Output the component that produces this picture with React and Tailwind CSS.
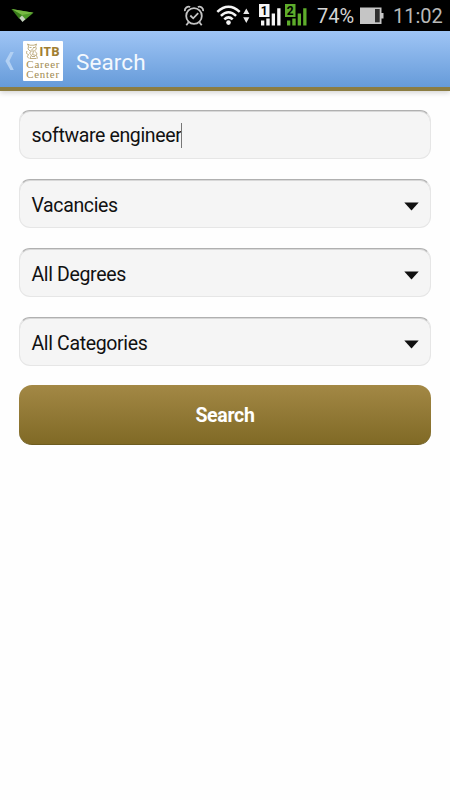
import React from "react";

function Plane() {
  return (
    <svg className="ml-[11px] h-[31px] w-[24px]" viewBox="11 0 24 31">
      <path d="M11.5 9L33.5 12.7L25.5 19.5Z" fill="#4f9a28" />
      <path d="M11.5 9L33.5 12.7L22 15Z" fill="#77b943" />
      <path d="M11.5 9L22 15.3L19.3 19Z" fill="#397d1b" />
      <path d="M19.3 18L22 15.5L25.5 19.3L22.5 22Z" fill="#c5d3bd" />
    </svg>
  );
}

function Alarm() {
  return (
    <svg className="h-[31px] w-[22px]" viewBox="183 0 22 31" fill="none" stroke="#c4c4c4" strokeWidth="1.8">
      <circle cx="194" cy="16" r="7.8" />
      <path d="M190.3 15.5L193.2 18.3L198.2 13.2" strokeWidth="1.8" />
      <path d="M184.8 11.2A4 4 0 0 1 190.2 7M203.2 11.2A4 4 0 0 0 197.8 7M188.6 22.3L186.3 25.2M199.4 22.3L201.7 25.2" />
    </svg>
  );
}

function Wifi() {
  return (
    <svg className="ml-[11px] h-[31px] w-[34px]" viewBox="216 0 34 31" fill="none" stroke="#f4f4f4" strokeWidth="2.5">
      <path d="M217.3 11.8Q228.5 1.6 239.7 11.8M220.9 15.8Q228.5 8.8 236.1 15.8M224.3 19.4Q228.5 15.3 232.7 19.4" />
      <circle cx="228.5" cy="22.6" r="2.3" fill="#f4f4f4" stroke="none" />
      <path d="M243.2 14.1L246.3 8.5L249.4 14.1ZM243.2 17.3L246.3 22.9L249.4 17.3Z" fill="#e8e8e8" stroke="none" />
    </svg>
  );
}

function Signal({ label, className }) {
  return (
    <svg className={className} viewBox="0 0 22 31" fill="currentColor">
      <path d="M0 4H10.5V17H0ZM2 20.5H5.3V25.5H2ZM7.3 18.5H10.7V25.5H7.3ZM12.7 13.5H16V25.5H12.7ZM18.2 8.3H21.5V25.5H18.2Z" />
      <text x="5.2" y="14.6" textAnchor="middle" fontFamily="Roboto, sans-serif" fontWeight="700" fontSize="12" fill="#000">
        {label}
      </text>
    </svg>
  );
}

function StatusBar() {
  return (
    <div className="flex h-[31px] items-center bg-black">
      <Plane />
      <div className="ml-auto flex h-[31px] items-center">
        <Alarm />
        <Wifi />
        <Signal label="1" className="ml-[9px] h-[31px] w-[22px] text-[#f5f5f5]" />
        <Signal label="2" className="ml-[4px] h-[31px] w-[22px] text-[#5ead2b]" />
        <span className="ml-[10px] w-[38px] text-[20px] leading-[32px] whitespace-nowrap text-[#d5d5d5]">74%</span>
        <svg className="ml-[5px] h-[31px] w-[24px]" viewBox="360 0 24 31">
          <path d="M360 7.5H381.5V13H383.5V18.5H381.5V24H360Z" fill="#c5c5c5" />
          <rect x="375" y="9" width="4.7" height="13.3" fill="#303030" />
        </svg>
        <span className="ml-[9px] w-[57px] text-[20px] leading-[32px] whitespace-nowrap text-[#b9b9b9]">11:02</span>
      </div>
    </div>
  );
}

function Logo() {
  return (
    <svg className="ml-[8px] h-[40px] w-[40px]" viewBox="23 41 40 40">
      <rect x="23" y="41" width="40" height="40" rx="1" fill="#fff" />
      <g fill="none" stroke="#b8a573" strokeWidth="0.9">
        <path d="M28.5 46L27.5 44L30 45.2H34L36.5 44L35.7 46.5L36.3 49L34.5 51H30L28 49Z" />
        <path d="M29.5 47.5H31.5M33 47.5H35M31.5 49.5L33.5 48.7M27 51Q25.5 54 28.5 54.5Q26 57 29 58.5M30.5 51.5Q28.5 54 31.5 55L30 58.5H36.5M33.5 51.5L32.5 54.5L36 55.5M35 51.5Q38 53 36.5 55.5L37.5 58.5M32 56.5H35" />
      </g>
      <text x="39.2" y="55.8" fontFamily="Open Sans, sans-serif" fontWeight="700" fontSize="12.3" fill="#a07e32" textLength="20.5" lengthAdjust="spacingAndGlyphs">ITB</text>
      <g fontFamily="Liberation Serif, serif" fill="#a08a50" fontSize="9.9" letterSpacing="0.7">
        <text x="26.3" y="68.2" textLength="34" lengthAdjust="spacingAndGlyphs">Career</text>
        <text x="26.3" y="78.2" textLength="33.5" lengthAdjust="spacingAndGlyphs">Center</text>
      </g>
    </svg>
  );
}

function Header() {
  return (
    <header className="flex h-[60px] items-center border-b-4 border-[#8b7d43] bg-linear-to-b from-[#9fc5f5] to-[#669bd9] pt-[3px] shadow-[0_2px_5px_rgba(0,0,0,0.16)]">
      <svg className="ml-[5px] h-[20px] w-[10px]" viewBox="5 51 10 20">
        <path d="M10.4 52H13.8L9.4 61L13.8 70H10.4L5.4 61Z" fill="#b2d0f3" />
      </svg>
      <Logo />
      <h1 className="ml-[13px] pt-[2px] text-[22.5px] leading-[28px] tracking-[0.1px] text-[#f3f8fe]">Search</h1>
    </header>
  );
}

function Field({ children, select }) {
  return (
    <div className="flex h-[49px] items-center justify-between rounded-[11px] border border-[#e6e6e6] border-t-[#b0b0b0] bg-[#f5f5f5] pt-px pr-[11px] pl-[11.5px] text-[19.5px] tracking-[-0.36px] text-[#111] shadow-[inset_0_1px_0_#d8d8d8]">
      {children}
      {select && (
        <svg className="mt-[4px] h-[9px] w-[15px]" viewBox="0 0 15 9">
          <path d="M0.3 0.5H14.7L7.5 8.5Z" fill="#101010" />
        </svg>
      )}
    </div>
  );
}

export default function App() {
  return (
    <div className="min-h-[800px] w-[450px] bg-[#fefefe] font-[Roboto,sans-serif]">
      <StatusBar />
      <Header />
      <main className="flex flex-col gap-[20px] px-[19px] pt-[19px]">
        <Field>
          <span className="flex items-center pt-px whitespace-nowrap">
            software engineer
            <span className="h-[25px] w-px bg-[#777]" />
          </span>
        </Field>
        <Field select><span className="pt-[3px]">Vacancies</span></Field>
        <Field select><span className="pt-[3px]">All Degrees</span></Field>
        <Field select><span className="pt-[3px]">All Categories</span></Field>
        <button className="-mt-px h-[60px] rounded-[13px] border-b border-[#6d5c20] bg-linear-to-b from-[#a38845] to-[#806a25] pt-[3px] text-[19.5px] tracking-[-0.3px] font-bold text-white">
          Search
        </button>
      </main>
    </div>
  );
}
